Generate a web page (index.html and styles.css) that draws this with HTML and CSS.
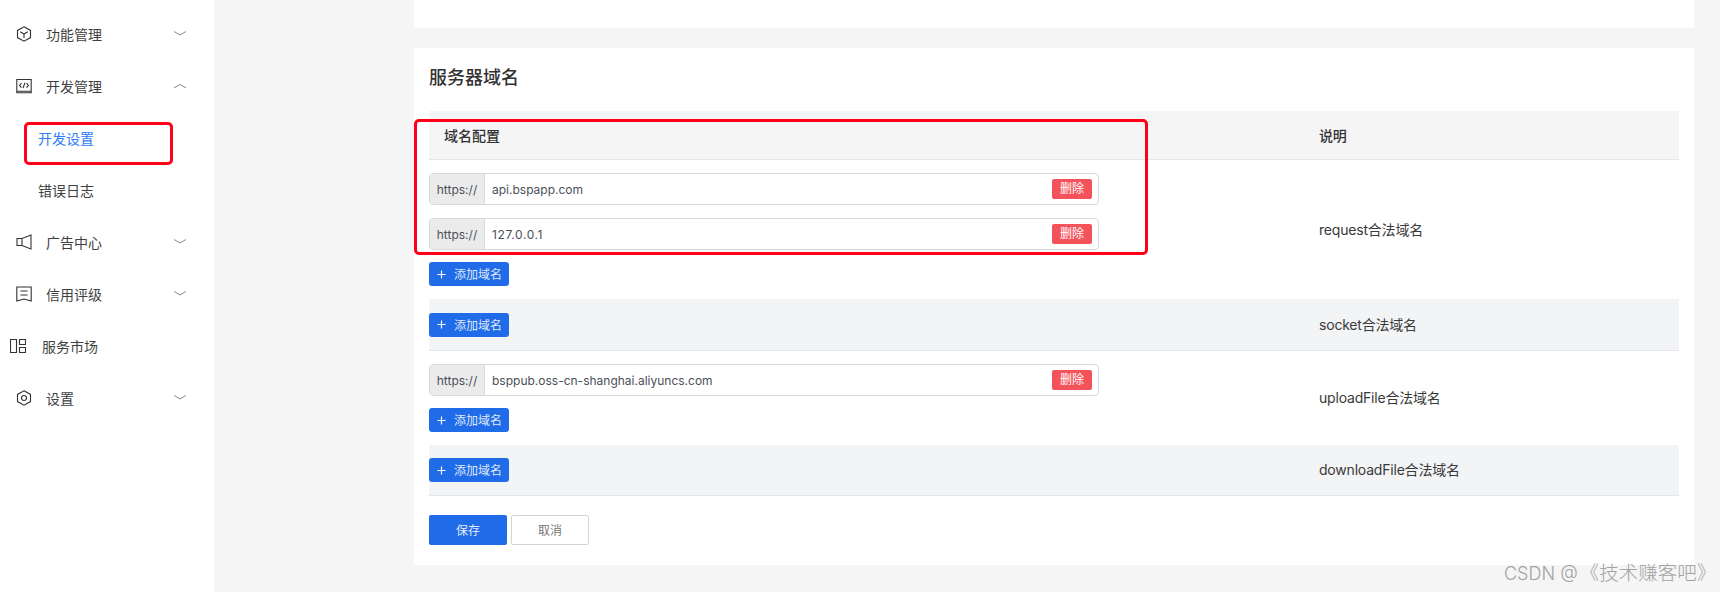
FILE: index.html
```html
<!DOCTYPE html>
<html lang="zh-CN">
<head>
<meta charset="utf-8">
<title>服务器域名</title>
<link rel="stylesheet" href="styles.css">
</head>
<body>
<div class="page">
  <aside class="sidebar">
    <div class="menu-item">
      <svg class="icon" viewBox="0 0 16 16"><path d="M8 .8 14.500 4.400V11.600L8 15.200 1.500 11.600V4.400Z M4.300 5.800 8 8 11.700 5.800 M8 8V12"/></svg>
      <span>功能管理</span>
      <svg class="chev" viewBox="0 0 12 6"><path d="M0 .5 6 4 12 .5"/></svg>
    </div>
    <div class="menu-item">
      <svg class="icon" viewBox="0 0 16 16"><path d="M.8 1.500H15.200V14.800H.8Z M.8 13.200H15.200 M5.500 5.200 3.500 7.400 5.500 9.600 M10.500 5.200 12.500 7.400 10.500 9.600 M8.900 4.800 7.100 10"/></svg>
      <span>开发管理</span>
      <svg class="chev" viewBox="0 0 12 6"><path d="M0 5 6 1.500 12 5"/></svg>
    </div>
    <div class="menu-item sub active">开发设置</div>
    <div class="menu-item sub">错误日志</div>
    <div class="menu-item">
      <svg class="icon" viewBox="0 0 16 16"><path d="M1 4.500H6L15 1V15L6 11.500H1Z M6 4.500V11.500"/></svg>
      <span>广告中心</span>
      <svg class="chev" viewBox="0 0 12 6"><path d="M0 .5 6 4 12 .5"/></svg>
    </div>
    <div class="menu-item">
      <svg class="icon" viewBox="0 0 16 16"><path d="M.8 1H15.200V15L8 13 .8 15Z M4.500 5H11.500 M4.500 9H11.500"/></svg>
      <span>信用评级</span>
      <svg class="chev" viewBox="0 0 12 6"><path d="M0 .5 6 4 12 .5"/></svg>
    </div>
    <div class="menu-item market">
      <svg class="icon" viewBox="0 0 16 16"><path d="M.5 1.500H6.500V14.500H.5Z M9.500 1.500H15.500V6.500H9.500Z M9.500 9.500H15.500V14.500H9.500Z"/></svg>
      <span>服务市场</span>
    </div>
    <div class="menu-item">
      <svg class="icon" viewBox="0 0 16 16"><path d="M8 .8 14.500 4.400V11.600L8 15.200 1.500 11.600V4.400Z"/><circle cx="8" cy="8" r="2.500"/></svg>
      <span>设置</span>
      <svg class="chev" viewBox="0 0 12 6"><path d="M0 .5 6 4 12 .5"/></svg>
    </div>
  </aside>
  <main class="main">
    <div class="card-top"></div>
    <section class="card">
      <h2 class="title">服务器域名</h2>
      <div class="table">
        <div class="row head">
          <div class="cell-main head-label">域名配置</div>
          <div class="cell-side">说明</div>
        </div>
        <div class="row r1">
          <div class="cell-main">
            <div class="group"><span class="prefix">https://</span><span class="value">api.bspapp.com</span><span class="del">删除</span></div>
            <div class="group"><span class="prefix">https://</span><span class="value num">127.0.0.1</span><span class="del">删除</span></div>
            <div class="add"><svg class="plus" viewBox="0 0 10 10"><path d="M5 .5V9.500M.5 5H9.500"/></svg>添加域名</div>
          </div>
          <div class="cell-side">request合法域名</div>
        </div>
        <div class="row alt r2">
          <div class="cell-main"><div class="add"><svg class="plus" viewBox="0 0 10 10"><path d="M5 .5V9.500M.5 5H9.500"/></svg>添加域名</div></div>
          <div class="cell-side">socket合法域名</div>
        </div>
        <div class="row r3">
          <div class="cell-main">
            <div class="group"><span class="prefix">https://</span><span class="value">bsppub.oss-cn-shanghai.aliyuncs.com</span><span class="del">删除</span></div>
            <div class="add"><svg class="plus" viewBox="0 0 10 10"><path d="M5 .5V9.500M.5 5H9.500"/></svg>添加域名</div>
          </div>
          <div class="cell-side">uploadFile合法域名</div>
        </div>
        <div class="row alt r4">
          <div class="cell-main"><div class="add"><svg class="plus" viewBox="0 0 10 10"><path d="M5 .5V9.500M.5 5H9.500"/></svg>添加域名</div></div>
          <div class="cell-side">downloadFile合法域名</div>
        </div>
      </div>
      <div class="actions">
        <div class="btn save">保存</div>
        <div class="btn cancel">取消</div>
      </div>
    </section>
  </main>
  <div class="mark mark-side"></div>
  <div class="mark mark-table"></div>
  <div class="watermark">CSDN @<span class="wm-cjk">《技术赚客吧》</span></div>
</div>
</body>
</html>
```
FILE: styles.css
```css
* { box-sizing: border-box; }
html, body { margin: 0; padding: 0; }
body {
  font-family: Inter, "Noto Sans CJK SC", sans-serif;
  font-size: 14px;
  color: #3a3a3a;
  background: #f5f5f5;
}
.page {
  position: relative;
  display: flex;
  width: 1720px;
  height: 592px;
  overflow: hidden;
}
.sidebar {
  flex: 0 0 214px;
  background: #fff;
  padding-top: 8px;
}
.menu-item {
  display: flex;
  align-items: center;
  height: 52px;
  padding-left: 16px;
  padding-right: 28px;
  font-size: 14px;
  color: #3f3f3f;
}
.menu-item span { flex: 1; margin-left: 14px; }
.icon {
  flex: 0 0 16px;
  width: 16px;
  height: 16px;
  fill: none;
  stroke: #333;
  stroke-width: 1.100;
}
.chev {
  width: 12px;
  height: 6px;
  margin-top: -1px;
  fill: none;
  stroke: #8a8a8a;
  stroke-width: 1;
}
.sub { padding-left: 38px; }
.active { color: #2e7cf6; }
.market { padding-left: 10px; }
.market span { margin-left: 16px; }
.main {
  flex: 1;
  padding: 0 26px 0 200px;
}
.card-top {
  height: 28px;
  background: #fff;
}
.card {
  margin-top: 20px;
  height: 517px;
  padding: 0 15px;
  background: #fff;
}
.title {
  margin: 0;
  height: 63px;
  padding-top: 17px;
  font-size: 18px;
  line-height: 26px;
  font-weight: 500;
  color: #333;
}
.table { display: flex; flex-direction: column; }
.row {
  display: flex;
  align-items: center;
  border-bottom: 1px solid #e5e6e8;
}
.head {
  height: 49px;
  background: #f5f5f5;
  font-weight: 500;
  color: #333;
}
.alt { background: #f3f4f6; }
.r1 { height: 139px; border-bottom: 0; }
.r2 { height: 52px; }
.r3 { height: 94px; border-bottom: 0; }
.r4 { height: 51px; }
.cell-main {
  flex: 0 0 890px;
  display: flex;
  flex-direction: column;
  align-items: flex-start;
}
.head-label { padding-left: 15px; }
.cell-side { flex: 1; letter-spacing: -0.2px; padding-bottom: 2px; }
.head .cell-side { padding-bottom: 0; }
.group {
  display: flex;
  align-items: center;
  width: 670px;
  height: 32px;
  margin-bottom: 13px;
  border: 1px solid #d8d9db;
  border-radius: 4px;
  background: #fff;
  color: #4b4f58;
  font-size: 12px;
}
.r1 .group + .group { margin-bottom: 12px; }
.r3 .group { margin-bottom: 12px; }
.prefix {
  flex: 0 0 55px;
  align-self: stretch;
  display: flex;
  align-items: center;
  justify-content: center;
  background: #ebebec;
  border-right: 1px solid #d8d9db;
  border-radius: 3px 0 0 3px;
}
.value { flex: 1; padding-left: 7px; }
.num { letter-spacing: .6px; }
.del {
  flex: 0 0 40px;
  height: 20px;
  margin-right: 6px;
  line-height: 20px;
  text-align: center;
  font-size: 12px;
  color: #fff;
  background: #f5535b;
  border-radius: 2px;
}
.add {
  display: flex;
  align-items: center;
  width: 80px;
  height: 24px;
  padding-left: 8px;
  padding-bottom: 1px;
  border-radius: 3px;
  background: #206be8;
  color: #dfe9fb;
  font-size: 12px;
}
.plus {
  width: 9px;
  height: 9px;
  margin-right: 8px;
  margin-top: 1px;
  fill: none;
  stroke: #fff;
  stroke-width: 1.300;
}
.actions {
  display: flex;
  gap: 4px;
  margin-top: 19px;
}
.btn {
  width: 78px;
  height: 30px;
  line-height: 31px;
  text-align: center;
  font-size: 12px;
  border-radius: 2px;
}
.save { background: #206be8; color: #e4ecfb; }
.cancel { border: 1px solid #d4d4d4; line-height: 29px; color: #777; }
.mark {
  position: absolute;
  border: 3px solid #ff0019;
  border-radius: 5px;
}
.mark-side { left: 24px; top: 122px; width: 149px; height: 43px; }
.mark-table { left: 414px; top: 119px; width: 734px; height: 136px; }
.watermark {
  position: absolute;
  left: 1504px;
  top: 561px;
  font-size: 18px;
  font-weight: 300;
  line-height: 24px;
  color: #a3a3a3;
  white-space: nowrap;
}
.wm-cjk { margin-left: 2px; font-size: 19.500px; }
```
